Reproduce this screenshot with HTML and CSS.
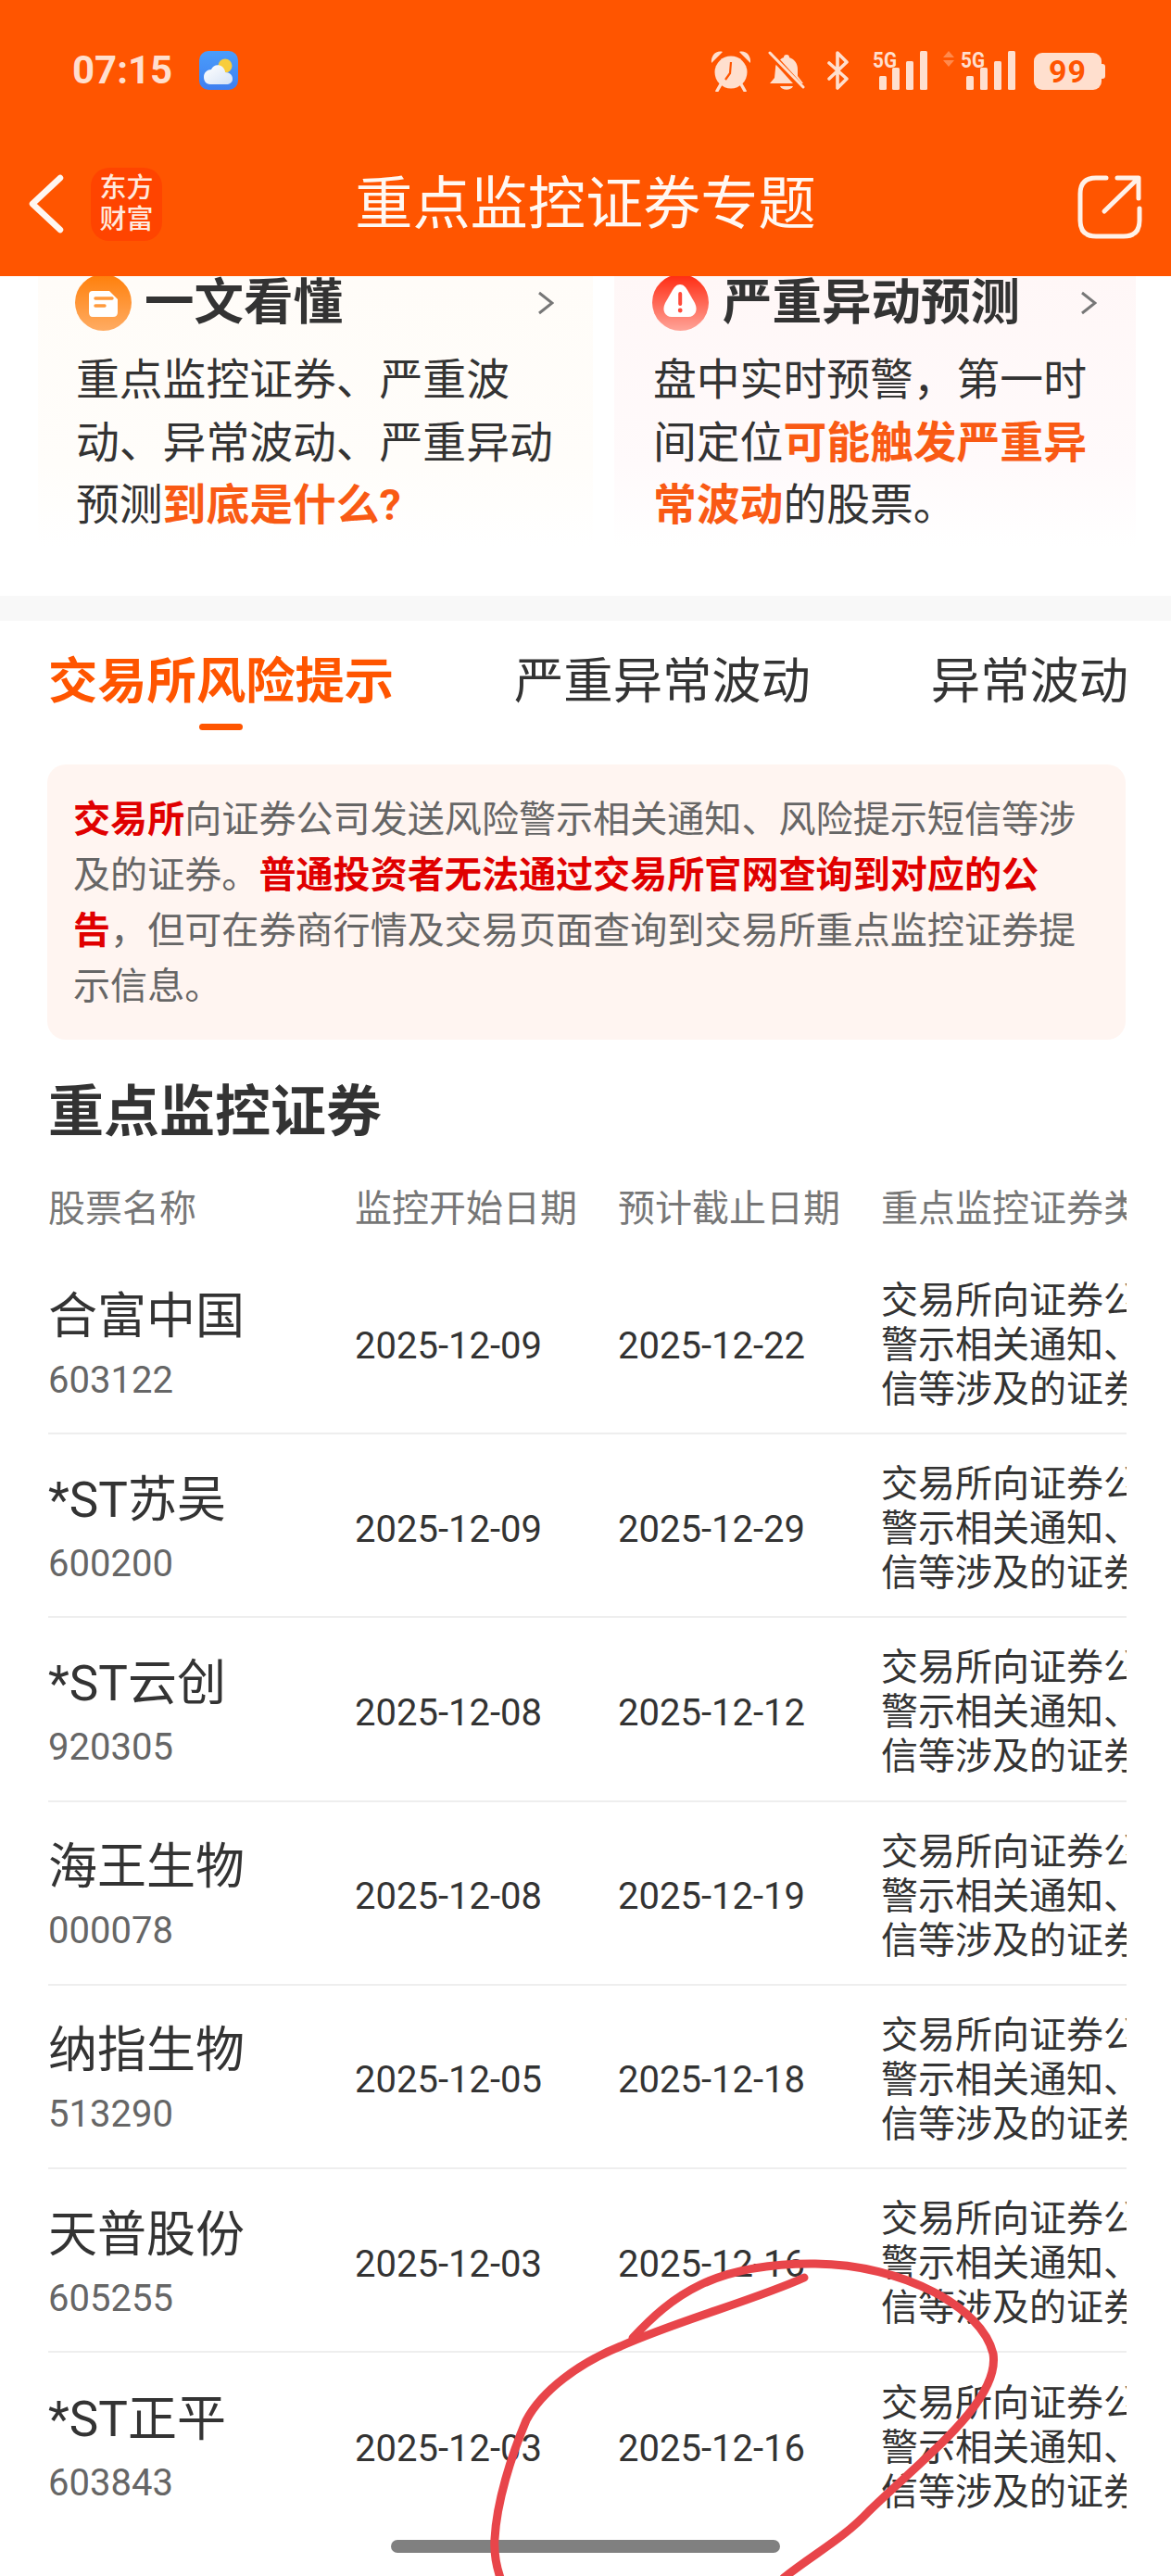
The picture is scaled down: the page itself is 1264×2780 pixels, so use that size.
FILE: index.html
```html
<!DOCTYPE html>
<html lang="zh-CN">
<head>
<meta charset="utf-8">
<title>重点监控证券专题</title>
<link rel="stylesheet" href="styles.css">
</head>
<body>
<div class="app">
  <header class="header">
    <div class="status">
      <div class="status-left">
        <span class="time">07:15</span>
        <svg class="weather" viewBox="0 0 42 42">
          <defs>
            <linearGradient id="wbg" x1="0" y1="0" x2="0" y2="1"><stop offset="0" stop-color="#4a9dfb"/><stop offset="1" stop-color="#3f7ff0"/></linearGradient>
            <linearGradient id="wcl" x1="0" y1="0" x2="1" y2="1"><stop offset="0" stop-color="#ffffff"/><stop offset="1" stop-color="#d5e2f5"/></linearGradient>
          </defs>
          <rect width="42" height="42" rx="10" fill="url(#wbg)"/>
          <circle cx="28" cy="16" r="7.5" fill="#f8cd3c"/>
          <path d="M12 36 C7 36 5 32 5 28 C5 23 9 20 13 20 C15 15 21 14 25 17 C27 19 28 21 28 23 C33 23 36 26 36 30 C36 34 33 36 29 36 Z" fill="url(#wcl)"/>
        </svg>
      </div>
      <div class="status-right">
        <svg class="ic-alarm" viewBox="0 0 44 45">
          <path d="M1 14 C0 6 6 0 13 2 Z M43 14 C44 6 38 0 31 2 Z" fill="#ffdfce"/>
          <circle cx="22" cy="24" r="17.5" fill="#ffdfce"/>
          <path d="M11 37 L7 44 M33 37 L37 44" stroke="#ffdfce" stroke-width="3.5" stroke-linecap="round" fill="none"/>
          <path d="M22 13 L21 25 L16 32" stroke="#ff5500" stroke-width="2.2" fill="none"/>
        </svg>
        <svg class="ic-bell" viewBox="0 0 41 42">
          <path d="M20 4 C22 4 23 5 23 7 C29 9 32 14 32 20 L32 27 L38 35 L2 35 L7 29 L8 19 C8 13 12 9 17 7 C17 5 18 4 20 4 Z" fill="#ffdfce"/>
          <path d="M13 38 C15 43 25 43 27 38 Z" fill="#ffdfce"/>
          <path d="M0 0 L38 42" stroke="#ff5500" stroke-width="7" fill="none"/>
          <path d="M2 2 L38 39" stroke="#ffdfce" stroke-width="3" stroke-linecap="round" fill="none"/>
        </svg>
        <svg class="ic-bt" viewBox="0 0 25 42">
          <path d="M3 13 L22 30 L12 40 L12 2 L22 12 L3 30" stroke="#ffdfce" stroke-width="3.6" stroke-linejoin="round" stroke-linecap="round" fill="none"/>
        </svg>
        <svg class="ic-sig" viewBox="0 0 59 42">
          <text x="0" y="18" class="sig-text" textLength="26" lengthAdjust="spacingAndGlyphs">5G</text>
          <rect x="7" y="27" width="8" height="15" rx="1.5" fill="#ffdfce"/>
          <rect x="21" y="18" width="8" height="24" rx="1.5" fill="#ffdfce"/>
          <rect x="36" y="11" width="8" height="31" rx="1.5" fill="#ffdfce"/>
          <rect x="51" y="0" width="8" height="42" rx="1.5" fill="#ffdfce"/>
        </svg>
        <svg class="ic-sig2" viewBox="0 0 78 42">
          <path d="M6 0 L12 7 L0 7 Z" fill="#ff8a4d"/>
          <path d="M0 10 L12 10 L6 17 Z" fill="#ff8a4d"/>
          <text x="19" y="18" class="sig-text" textLength="26" lengthAdjust="spacingAndGlyphs">5G</text>
          <rect x="25" y="27" width="8" height="15" rx="1.5" fill="#ffdfce"/>
          <rect x="40" y="18" width="8" height="24" rx="1.5" fill="#ffdfce"/>
          <rect x="55" y="11" width="8" height="31" rx="1.5" fill="#ffdfce"/>
          <rect x="70" y="0" width="8" height="42" rx="1.5" fill="#ffdfce"/>
        </svg>
        <div class="battery"><span class="battery-level">99</span></div>
      </div>
    </div>
    <nav class="nav">
      <div class="nav-left">
        <svg class="back" viewBox="0 0 40 64">
          <path d="M35 4 L5 32 L35 60" stroke="#fff6f0" stroke-width="6.5" stroke-linecap="round" stroke-linejoin="round" fill="none"/>
        </svg>
        <div class="logo"><span>东方</span><span>财富</span></div>
      </div>
      <h1 class="nav-title">重点监控证券专题</h1>
      <div class="nav-right">
        <svg class="share" viewBox="0 0 70 69">
          <path d="M31 3 H20 Q3 3 3 20 V49 Q3 66 20 66 H50 Q67 66 67 49 V36" stroke="#fff1e8" stroke-width="5" stroke-linecap="round" fill="none"/>
          <path d="M29 39 L65 4 M43 3 H66 V25" stroke="#fff1e8" stroke-width="5" stroke-linecap="round" stroke-linejoin="round" fill="none"/>
        </svg>
      </div>
    </nav>
  </header>

  <main class="main">
    <section class="cards">
      <article class="card card-orange">
        <div class="card-head">
          <svg class="card-icon" viewBox="0 0 61 61">
            <defs><linearGradient id="go" x1="0" y1="0" x2="0" y2="1"><stop offset="0" stop-color="#ff7f0a"/><stop offset="1" stop-color="#ffac63"/></linearGradient></defs>
            <circle cx="30.5" cy="30.5" r="30.5" fill="url(#go)"/>
            <path d="M19 18 H37 L46 27 V41 Q46 46 41 46 H19 Q15 46 15 41 V22 Q15 18 19 18 Z" fill="#ffffff"/>
            <path d="M22 26 H40 M22 34 H32" stroke="#ff9a3c" stroke-width="3.4" stroke-linecap="round" fill="none"/>
          </svg>
          <h2 class="card-title">一文看懂</h2>
          <svg class="card-arrow" viewBox="0 0 18 26"><path d="M2 2 L16 13 L2 24" stroke="#777777" stroke-width="3" fill="none"/></svg>
        </div>
        <p class="card-text">重点监控证券、严重波动、异常波动、严重异动预测<b>到底是什么?</b></p>
      </article>
      <article class="card card-red">
        <div class="card-head">
          <svg class="card-icon" viewBox="0 0 61 61">
            <defs><linearGradient id="gr" x1="0" y1="0" x2="0" y2="1"><stop offset="0" stop-color="#ff2a10"/><stop offset="1" stop-color="#ffa499"/></linearGradient></defs>
            <circle cx="30.5" cy="30.5" r="30.5" fill="url(#gr)"/>
            <path d="M30 11 C34 11 36 14 38 17 L46 31 C50 39 46 46 39 46 H21 C14 46 10 39 14 31 L22 17 C24 14 26 11 30 11 Z" fill="#ffffff"/>
            <rect x="28.2" y="19" width="4" height="15" rx="2" fill="#ff4a3a"/>
            <circle cx="30.2" cy="39" r="2.4" fill="#ff4a3a"/>
          </svg>
          <h2 class="card-title">严重异动预测</h2>
          <svg class="card-arrow" viewBox="0 0 18 26"><path d="M2 2 L16 13 L2 24" stroke="#777777" stroke-width="3" fill="none"/></svg>
        </div>
        <p class="card-text">盘中实时预警，第一时间定位<b>可能触发严重异常波动</b>的股票。</p>
      </article>
    </section>

    <div class="band"></div>

    <div class="tabs">
      <div class="tab tab-active">交易所风险提示<i class="tab-bar"></i></div>
      <div class="tab">严重异常波动</div>
      <div class="tab">异常波动</div>
    </div>

    <p class="notice"><b>交易所</b>向证券公司发送风险警示相关通知、风险提示短信等涉及的证券。<b>普通投资者无法通过交易所官网查询到对应的公告</b>，但可在券商行情及交易页面查询到交易所重点监控证券提示信息。</p>

    <h2 class="section-title">重点监控证券</h2>

    <div class="table">
      <div class="thead">
        <span>股票名称</span><span>监控开始日期</span><span>预计截止日期</span><span>重点监控证券类型</span>
      </div>
      <div class="row">
        <div class="stock"><span class="stock-name">合富中国</span><span class="stock-code">603122</span></div>
        <span class="date">2025-12-09</span><span class="date">2025-12-22</span>
        <span class="kind">交易所向证券公司发送风险警示相关通知、风险提示短信等涉及的证券</span>
      </div>
      <div class="row">
        <div class="stock"><span class="stock-name">*ST苏吴</span><span class="stock-code">600200</span></div>
        <span class="date">2025-12-09</span><span class="date">2025-12-29</span>
        <span class="kind">交易所向证券公司发送风险警示相关通知、风险提示短信等涉及的证券</span>
      </div>
      <div class="row">
        <div class="stock"><span class="stock-name">*ST云创</span><span class="stock-code">920305</span></div>
        <span class="date">2025-12-08</span><span class="date">2025-12-12</span>
        <span class="kind">交易所向证券公司发送风险警示相关通知、风险提示短信等涉及的证券</span>
      </div>
      <div class="row">
        <div class="stock"><span class="stock-name">海王生物</span><span class="stock-code">000078</span></div>
        <span class="date">2025-12-08</span><span class="date">2025-12-19</span>
        <span class="kind">交易所向证券公司发送风险警示相关通知、风险提示短信等涉及的证券</span>
      </div>
      <div class="row">
        <div class="stock"><span class="stock-name">纳指生物</span><span class="stock-code">513290</span></div>
        <span class="date">2025-12-05</span><span class="date">2025-12-18</span>
        <span class="kind">交易所向证券公司发送风险警示相关通知、风险提示短信等涉及的证券</span>
      </div>
      <div class="row">
        <div class="stock"><span class="stock-name">天普股份</span><span class="stock-code">605255</span></div>
        <span class="date">2025-12-03</span><span class="date">2025-12-16</span>
        <span class="kind">交易所向证券公司发送风险警示相关通知、风险提示短信等涉及的证券</span>
      </div>
      <div class="row">
        <div class="stock"><span class="stock-name">*ST正平</span><span class="stock-code">603843</span></div>
        <span class="date">2025-12-03</span><span class="date">2025-12-16</span>
        <span class="kind">交易所向证券公司发送风险警示相关通知、风险提示短信等涉及的证券</span>
      </div>
    </div>
  </main>

  <div class="home-bar"></div>
  <svg class="scribble" viewBox="0 0 1264 2780">
    <path d="M868 2458 C815 2482 730 2505 670 2532 C625 2550 585 2580 568 2612 C552 2650 536 2700 534 2740 C533 2755 536 2770 540 2782" />
    <path d="M683 2523 C725 2478 770 2442 880 2443 C975 2444 1060 2490 1072 2540 C1080 2590 1000 2650 938 2710 C910 2740 880 2755 846 2782" />
  </svg>
</div>
</body>
</html>
```
FILE: styles.css
```css
* { box-sizing: border-box; }
html, body { margin: 0; padding: 0; }
body {
  background: #fff;
  font-family: Roboto, "Noto Sans CJK SC", "Noto Sans", sans-serif;
  color: #333;
}
h1, h2, p { margin: 0; font-weight: 400; }

.app {
  position: relative;
  width: 1264px;
  height: 2780px;
  overflow: hidden;
  background: #fff;
}

/* Header */
.header {
  height: 298px;
  background: #ff5500;
  padding-top: 55px;
}
.status {
  display: flex;
  justify-content: space-between;
  align-items: center;
  height: 42px;
  padding: 0 71px 0 78px;
}
.status-left { display: flex; align-items: center; gap: 29px; }
.time {
  font-size: 42px;
  font-weight: 700;
  color: #ffdfce;
  line-height: 42px;
}
.weather { width: 42px; height: 42px; display: block; }
.status-right { display: flex; align-items: center; }
.status-right svg { display: block; flex: none; }
.ic-alarm { width: 44px; height: 45px; }
.ic-bell { width: 41px; height: 42px; margin-left: 18px; }
.ic-bt { width: 25px; height: 42px; margin-left: 22px; }
.ic-sig { width: 59px; height: 42px; margin-left: 25px; }
.ic-sig2 { width: 78px; height: 42px; margin-left: 17px; }
.sig-text {
  font-family: Roboto, sans-serif;
  font-weight: 700;
  font-size: 23px;
  fill: #ffdfce;
}
.battery {
  position: relative;
  width: 73px;
  height: 40px;
  margin-left: 20px;
  margin-right: 4px;
  margin-top: 2px;
  background: #ffdfce;
  border-radius: 9px;
  display: flex;
  align-items: center;
  justify-content: center;
}
.battery::after {
  content: "";
  position: absolute;
  right: -4px;
  top: 12px;
  width: 4px;
  height: 16px;
  background: #ffdfce;
  border-radius: 0 3px 3px 0;
}
.battery-level {
  font-size: 34px;
  line-height: 40px;
  font-weight: 700;
  color: #ff5500;
  letter-spacing: 1px;
}

.nav {
  display: grid;
  grid-template-columns: 1fr auto 1fr;
  align-items: center;
  height: 80px;
  margin-top: 82px;
}
.nav-left { display: flex; align-items: center; padding-left: 30px; }
.back { width: 40px; height: 64px; display: block; }
.logo {
  width: 77px;
  height: 79px;
  margin-left: 28px;
  border-radius: 20px;
  background: #ff4400;
  color: #ffe9dd;
  font-size: 29px;
  font-weight: 500;
  line-height: 34px;
  display: flex;
  flex-direction: column;
  align-items: center;
  justify-content: center;
}
.nav-title {
  font-size: 62.2px;
  line-height: 80px;
  color: #fff8f2;
  margin-top: 2px;
}
.nav-right { display: flex; justify-content: flex-end; padding-right: 31px; padding-top: 6px; }
.share { width: 70px; height: 69px; display: block; }

/* Cards */
.cards {
  display: flex;
  gap: 23px;
  padding: 0 38px 0 41px;
  height: 345px;
}
.card { height: 292px; overflow: hidden; }
.card-orange {
  width: 599px;
  padding: 0 42px 0 40px;
  background: linear-gradient(180deg, #fffcf8 0%, #fffdfa 70%, #ffffff 100%);
}
.card-red {
  width: 563px;
  padding: 0 42px 0 41px;
  background: linear-gradient(180deg, #fff7f7 0%, #fffafb 70%, #ffffff 100%);
}
.card-head { display: flex; align-items: center; height: 58px; }
.card-icon { width: 61px; height: 61px; flex: none; margin-top: -1px; }
.card-title {
  font-size: 53.5px;
  line-height: 58px;
  font-weight: 700;
  color: #333;
  margin-left: 14px;
  white-space: nowrap;
  flex: 1;
}
.card-red .card-title { margin-left: 15px; }
.card-arrow { width: 18px; height: 26px; flex: none; }
.card-text {
  margin: 21px 0 0 1px;
  font-size: 46.8px;
  line-height: 67.5px;
  color: #333;
}
.card-text b { font-weight: 700; color: #f95a14; }

.band { height: 27px; background: #f8f8f8; }

/* Tabs */
.tabs {
  display: flex;
  gap: 130px;
  padding: 34px 0 0 52px;
  height: 155px;
  white-space: nowrap;
}
.tab {
  display: flex;
  flex-direction: column;
  align-items: center;
  font-size: 53.3px;
  line-height: 64px;
  color: #333;
}
.tab-active { color: #ff5500; font-weight: 700; }
.tab-bar {
  display: block;
  width: 47px;
  height: 7px;
  margin-top: 13px;
  border-radius: 4px;
  background: #ff5500;
}

/* Notice */
.notice {
  margin: 0 49px 0 51px;
  height: 297px;
  padding: 30px 28px 0;
  background: #fff5f1;
  border-radius: 20px;
  font-size: 40.1px;
  line-height: 60px;
  color: #666;
}
.notice b { font-weight: 700; color: #e00000; }

.section-title {
  margin: 39px 0 0 52px;
  font-size: 60px;
  line-height: 80px;
  font-weight: 700;
  color: #333;
}

/* Table */
.table {
  margin: 11px 48px 0 52px;
  overflow: hidden;
}
.thead, .row {
  display: grid;
  grid-template-columns: 331px 284px 284px 480px;
  width: 1379px;
  align-items: center;
}
.thead {
  height: 98px;
  font-size: 40px;
  color: #777;
  white-space: nowrap;
}
.row {
  height: 198.2px;
  padding-top: 8px;
  border-bottom: 2px solid #eeeeee;
}
.row:last-child { border-bottom: 0; }
.stock { display: flex; flex-direction: column; margin-top: -12px; }
.stock-name { font-size: 53px; line-height: 87px; color: #333; }
.stock-code { font-size: 40px; line-height: 50px; color: #666; }
.date { font-size: 40px; color: #333; }
.kind { font-size: 40px; line-height: 48px; color: #333; width: 480px; }

/* Overlays */
.home-bar {
  position: absolute;
  left: 422px;
  top: 2741px;
  width: 420px;
  height: 14px;
  border-radius: 7px;
  background: #808080;
}
.scribble {
  position: absolute;
  left: 0;
  top: 0;
  width: 1264px;
  height: 2780px;
  pointer-events: none;
}
.scribble path {
  fill: none;
  stroke: #e8454a;
  stroke-width: 9;
  stroke-linecap: round;
  stroke-linejoin: round;
}
```
